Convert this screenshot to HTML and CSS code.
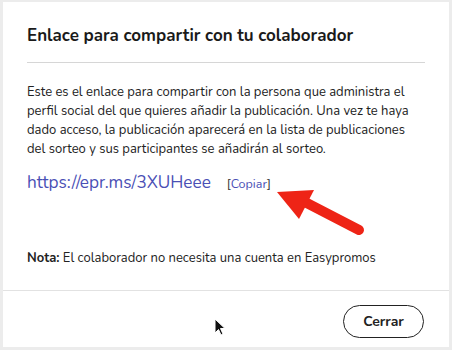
FILE: index.html
```html
<!DOCTYPE html>
<html lang="es">
<head>
  <meta charset="UTF-8">
  <title>Enlace para compartir</title>
  <link rel="stylesheet" href="styles.css">
</head>
<body>
  <div class="modal">
    <div class="modal-cuerpo">
      <h2 class="titulo">Enlace para compartir con tu colaborador</h2>
      <p class="texto">Este es el enlace para compartir con la persona que administra el perfil social del que quieres añadir la publicación. Una vez te haya dado acceso, la publicación aparecerá en la lista de publicaciones del sorteo y sus participantes se añadirán al sorteo.</p>
      <div class="enlace">
        <a class="url" href="#">https://epr.ms/3XUHeee</a>
        <span class="copiar">[<a href="#">Copiar</a>]</span>
      </div>
      <p class="nota"><strong>Nota:</strong> El colaborador no necesita una cuenta en Easypromos</p>
    </div>
    <div class="modal-pie">
      <button class="btn-cerrar">Cerrar</button>
    </div>

    <!-- flecha roja de la captura -->
    <svg class="flecha" width="100" height="60" viewBox="0 0 100 60">
      <line x1="28" y1="18" x2="86" y2="48" stroke="#ee2416" stroke-width="10" stroke-linecap="round"/>
      <polygon points="4,10 41,8 26,37" fill="#ee2416"/>
    </svg>
    <!-- cursor -->
    <svg class="cursor" width="14" height="20" viewBox="0 0 14 20">
      <path d="M1 1 L1 15 L4.5 11.5 L7 17 L9 16 L6.5 10.5 L11 10.5 Z" fill="#111" stroke="#fff" stroke-width="1"/>
    </svg>
  </div>
</body>
</html>
```

FILE: styles.css
```css
body {
  margin: 0;
  background: #fff;
  font-family: "Nunito", "Lato", sans-serif;
  color: #222;
}
.modal {
  position: relative;
  width: 446px;
  height: 345px;
  border: 3px solid #ececec;
  border-top-width: 2px;
  background: #fff;
}
.modal-cuerpo {
  padding: 22px 24px 0 24px;
}
.titulo {
  margin: 0;
  padding-bottom: 15px;
  border-bottom: 1px solid #d6d6d6;
  font-size: 17px;
  font-weight: 700;
  color: #1a1a1a;
}
.texto {
  margin: 20px 0 0;
  font-size: 13px;
  line-height: 19px;
}
.enlace {
  margin-top: 12px;
  display: flex;
  align-items: baseline;
  gap: 16px;
}
.url {
  font-size: 17.2px;
  color: #4a4fb5;
  text-decoration: none;
}
.copiar {
  font-size: 12.5px;
  color: #333;
}
.copiar a {
  color: #4a4fb5;
  text-decoration: none;
}
.nota {
  margin: 55px 0 0;
  font-size: 13px;
}
.nota strong {
  font-weight: 700;
}
.modal-pie {
  margin-top: 23px;
  border-top: 1px solid #e2e2e2;
  padding: 14px 25px 0 0;
  display: flex;
  justify-content: flex-end;
}
.btn-cerrar {
  width: 81px;
  height: 33px;
  border: 1px solid #222;
  border-radius: 17px;
  background: #fff;
  font-family: "Nunito", "Lato", sans-serif;
  font-size: 14px;
  font-weight: 700;
  color: #222;
}
.flecha {
  position: absolute;
  left: 270px;
  top: 180px;
}
.cursor {
  position: absolute;
  left: 211px;
  top: 316px;
}
```
